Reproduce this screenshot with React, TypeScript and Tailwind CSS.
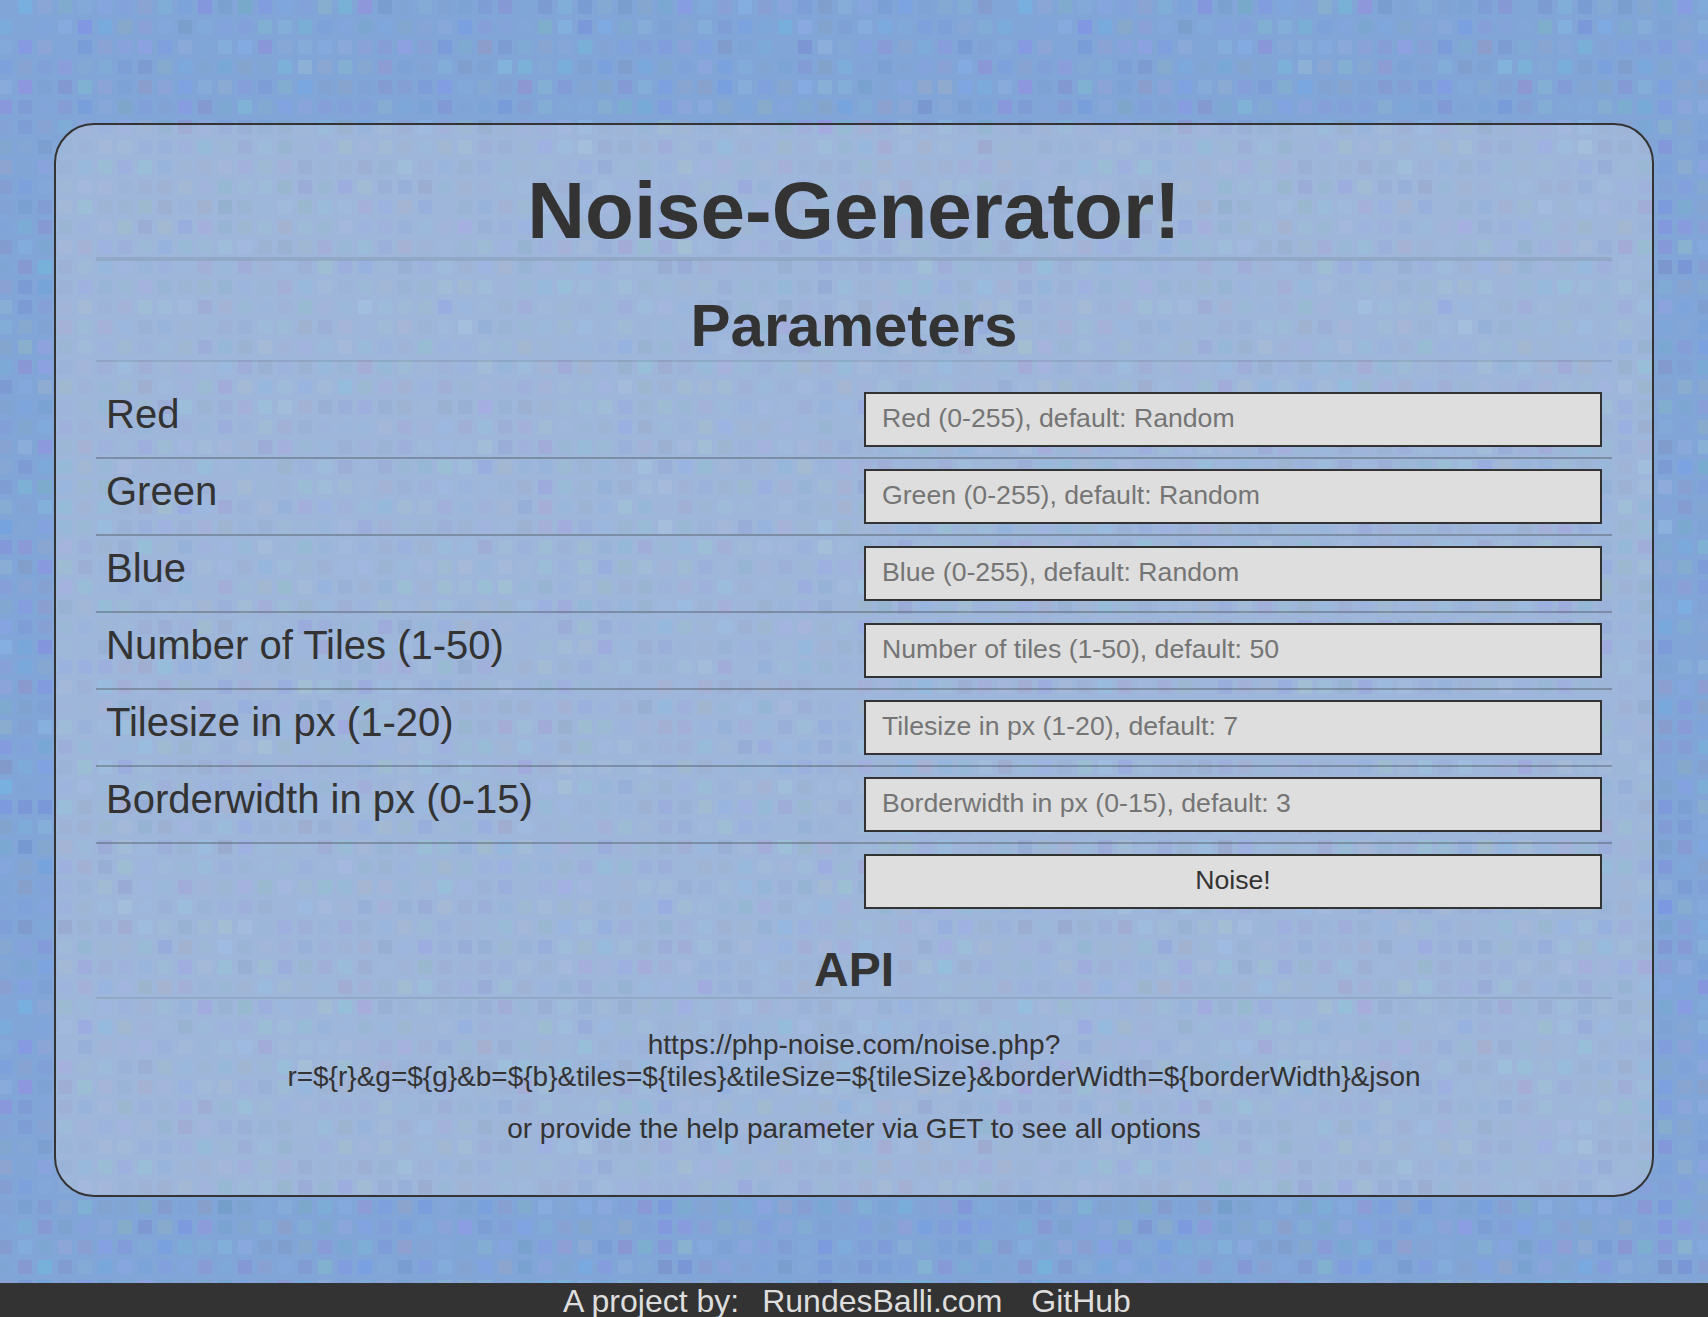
const PERIOD = 50;
const PITCH = 20;

function tileColors() {
  let seed = 90210;
  const next = () => {
    seed = (seed + 0x6d2b79f5) | 0;
    let t = Math.imul(seed ^ (seed >>> 15), 1 | seed);
    t = (t + Math.imul(t ^ (t >>> 7), 61 | t)) ^ t;
    return ((t ^ (t >>> 14)) >>> 0) / 4294967296;
  };
  const spread = () => (next() + next() - 1) * 0.65;
  return Array.from({ length: PERIOD * PERIOD }, () => {
    const r = Math.round(130 + spread() * 20);
    const g = Math.round(164 + spread() * 23);
    const b = Math.round(214 + spread() * 20);
    return `rgb(${r},${g},${b})`;
  });
}

const TILES = tileColors();

const FIELDS = [
  ['Red', 'Red (0-255), default: Random'],
  ['Green', 'Green (0-255), default: Random'],
  ['Blue', 'Blue (0-255), default: Random'],
  ['Number of Tiles (1-50)', 'Number of tiles (1-50), default: 50'],
  ['Tilesize in px (1-20)', 'Tilesize in px (1-20), default: 7'],
  ['Borderwidth in px (0-15)', 'Borderwidth in px (0-15), default: 3'],
];

function NoiseBackground() {
  return (
    <svg className="absolute inset-0 h-full w-full" aria-hidden="true">
      <defs>
        <pattern id="noise" x="-2" y="0" width="1000" height="1000" patternUnits="userSpaceOnUse">
          <rect width="1000" height="1000" fill="#82a5d7" />
          {TILES.map((fill, i) => (
            <rect key={i} x={(i % PERIOD) * PITCH} y={Math.floor(i / PERIOD) * PITCH} width="14" height="14" fill={fill} />
          ))}
        </pattern>
      </defs>
      <rect width="100%" height="100%" fill="url(#noise)" />
    </svg>
  );
}

export default function App() {
  return (
    <div className="relative flex h-[1317px] w-full flex-col overflow-hidden font-['Liberation_Sans',Arial,sans-serif] text-[#333]">
      <NoiseBackground />
      <div className="relative flex-1 px-[54px] pt-[123px]">
        <main className="h-[1074px] rounded-[40px] border-2 border-[#333] bg-[#dedede]/30 px-[40px] pt-[40px] text-center">
          <h1 className="h-[96px] border-b-4 border-[#333]/10 text-[80px] leading-[92px] font-bold">Noise-Generator!</h1>
          <h2 className="mt-[34px] h-[67px] border-b-2 border-[#333]/10 text-[60px] leading-[62px] font-bold">Parameters</h2>
          <form className="mt-[20px]">
            {FIELDS.map(([label, hint]) => (
              <div key={label} className="flex h-[77px] items-start border-b-2 border-[#333]/30 p-[10px] text-left">
                <label className="w-[758px] text-[40px] leading-[44px]">{label}</label>
                <input
                  className="h-[55px] w-[738px] border-2 border-[#333] bg-[#dedede] px-4 pb-[2px] text-[26.67px] outline-none placeholder:text-[#757575]"
                  placeholder={hint}
                />
              </div>
            ))}
            <div className="flex h-[75px] justify-end p-[10px]">
              <button type="button" className="h-[55px] w-[738px] border-2 border-[#333] bg-[#dedede] pb-[3px] text-[26.67px] leading-[30px] text-[#333]">
                Noise!
              </button>
            </div>
          </form>
          <h3 className="mt-[24px] h-[56px] border-b-2 border-[#333]/10 text-[48px] leading-[54px] font-bold">API</h3>
          <p className="mt-[30px] text-[28px] leading-[32px]">
            https://php-noise.com/noise.php?
            <br />
            {'r=${r}&g=${g}&b=${b}&tiles=${tiles}&tileSize=${tileSize}&borderWidth=${borderWidth}&json'}
          </p>
          <p className="mt-[20px] text-[28px] leading-[32px]">or provide the help parameter via GET to see all options</p>
        </main>
      </div>
      <footer className="relative flex h-[34px] justify-center bg-[#333] pr-[14px] text-[32px] leading-[36px] text-[#dedede]">
        <span>A project by:</span>
        <a className="ml-[23px]">RundesBalli.com</a>
        <a className="ml-[29px]">GitHub</a>
      </footer>
    </div>
  );
}
